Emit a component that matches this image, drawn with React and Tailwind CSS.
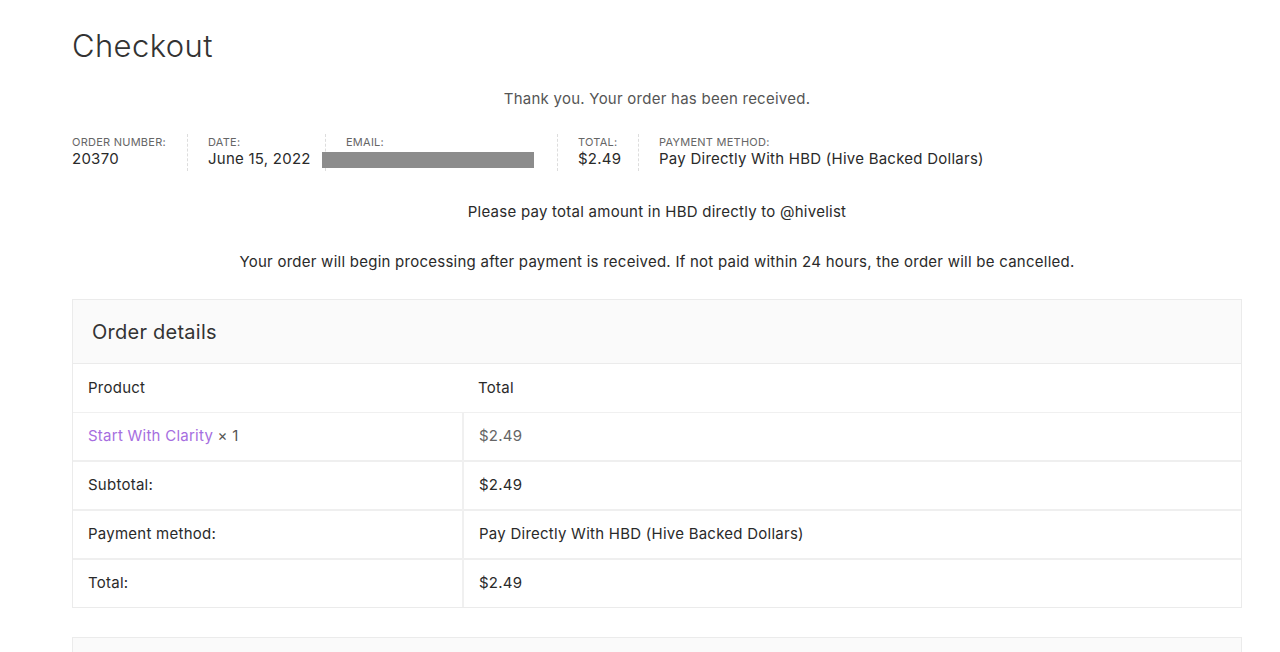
import React from "react";

const font = { fontFamily: "Inter, 'Noto Sans', sans-serif" };

const rows = [
    { label: "Subtotal:", value: "$2.49" },
    { label: "Payment method:", value: "Pay Directly With HBD (Hive Backed Dollars)" },
    { label: "Total:", value: "$2.49" },
];

const App = () => {
    return (
        <div className="min-h-screen bg-white pl-[72px] pr-[38px] pt-[26px] text-[#555] tracking-[0.25px]" style={font}>
            <h1 className="text-[31px] leading-[40px] font-light text-[#333] tracking-[0.4px]">Checkout</h1>

            <p className="mt-[21px] text-center text-[15px] leading-[24px] text-[#555]">
                Thank you. Your order has been received.
            </p>

            {/* Order overview */}
            <ul className="mt-[23px] flex items-stretch">
                <li className="w-[116px] border-r border-dashed border-[#ddd] pb-[2px]">
                    <div className="text-[11px] leading-[16px] uppercase text-[#666]">Order number:</div>
                    <div className="-mt-[1px] text-[15px] leading-[20px] text-[#2a2a2a]">20370</div>
                </li>
                <li className="w-[138px] border-r border-dashed border-[#ddd] pl-[20px]">
                    <div className="text-[11px] leading-[16px] uppercase text-[#666]">Date:</div>
                    <div className="-mt-[1px] text-[15px] leading-[20px] text-[#2a2a2a]">June 15, 2022</div>
                </li>
                <li className="w-[232px] border-r border-dashed border-[#ddd] pl-[20px]">
                    <div className="text-[11px] leading-[16px] uppercase text-[#666]">Email:</div>
                    <div className="mt-[2px] -ml-[24px] h-[16px] w-[212px] bg-[#8c8c8c]" />
                </li>
                <li className="w-[81px] border-r border-dashed border-[#ddd] pl-[20px]">
                    <div className="text-[11px] leading-[16px] uppercase text-[#666]">Total:</div>
                    <div className="-mt-[1px] text-[15px] leading-[20px] text-[#2a2a2a]">$2.49</div>
                </li>
                <li className="pl-[20px]">
                    <div className="text-[11px] leading-[16px] uppercase text-[#666]">Payment method:</div>
                    <div className="-mt-[1px] text-[15px] leading-[20px] text-[#2a2a2a]">
                        Pay Directly With HBD (Hive Backed Dollars)
                    </div>
                </li>
            </ul>

            <p className="mt-[29px] text-center text-[15px] leading-[24px] text-[#2a2a2a]">
                Please pay total amount in HBD directly to @hivelist
            </p>
            <p className="mt-[26px] text-center text-[15px] leading-[24px] text-[#2a2a2a]">
                Your order will begin processing after payment is received. If not paid within 24 hours, the order will be cancelled.
            </p>

            {/* Order details */}
            <section className="mt-[25px] border border-[#ebebeb]">
                <div className="h-[64px] flex items-center bg-[#fafafa] border-b border-[#ebebeb] px-[19px]">
                    <h2 className="text-[20px] font-normal text-[#333]">Order details</h2>
                </div>
                <table className="w-full border-collapse text-[15px] text-[#2a2a2a]">
                    <thead>
                        <tr className="h-[48px] border-b border-[#f0f0f0]">
                            <th className="w-[390px] px-[15px] text-left font-normal">Product</th>
                            <th className="px-[15px] text-left font-normal">Total</th>
                        </tr>
                    </thead>
                    <tbody>
                        <tr className="h-[49px] border-b-2 border-[#efefef]">
                            <td className="px-[15px] border-r-2 border-[#f0f0f0]">
                                <a href="#" className="text-[#a66ee0]">Start With Clarity</a>
                                <span className="text-[#555]"> × 1</span>
                            </td>
                            <td className="px-[15px] text-[#666]">$2.49</td>
                        </tr>
                        {rows.map((row, i) => (
                            <tr
                                key={i}
                                className={
                                    i < rows.length - 1
                                        ? "h-[49px] border-b-2 border-[#efefef]"
                                        : "h-[48px]"
                                }
                            >
                                <td className="px-[15px] border-r-2 border-[#f0f0f0]">{row.label}</td>
                                <td className="px-[15px]">{row.value}</td>
                            </tr>
                        ))}
                    </tbody>
                </table>
            </section>

            <section className="mt-[29px] h-[40px] border border-[#ebebeb] bg-[#fafafa]" />
        </div>
    );
};

export default App;
